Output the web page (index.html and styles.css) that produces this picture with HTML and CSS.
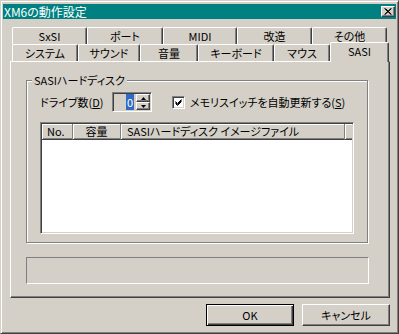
FILE: index.html
```html
<!DOCTYPE html>
<html lang="ja">
<head>
    <meta charset="UTF-8">
    <title>XM6の動作設定</title>
    <link rel="stylesheet" href="styles.css">
</head>
<body>
    <div class="window">
        <div class="caption">
            <span class="title">XM6の動作設定</span>
            <span class="close">
                <svg width="8" height="7" viewBox="0 0 8 7"><path d="M0.5 0.5 L7 6.5 M1.5 0.5 L7.5 6.5 M7 0.5 L0.5 6.5 M7.5 0.5 L1 6.5" stroke="#000" stroke-width="1" fill="none"/></svg>
            </span>
        </div>
        <div class="client">
            <div class="tabs">
                <div class="tab-row">
                    <div class="tab w75">SxSI</div>
                    <div class="tab w76">ポート</div>
                    <div class="tab w74">MIDI</div>
                    <div class="tab w75">改造</div>
                    <div class="tab w75">その他</div>
                </div>
                <div class="tab-row">
                    <div class="tab w66">システム</div>
                    <div class="tab w62">サウンド</div>
                    <div class="tab w58">音量</div>
                    <div class="tab w76">キーボード</div>
                    <div class="tab w56">マウス</div>
                    <div class="tab tab-active">SASI</div>
                </div>
            </div>
            <div class="panel">
                <div class="group">
                    <div class="group-title">SASIハードディスク</div>
                    <div class="group-body">
                        <div class="drive-row">
                            <span class="drive-label">ドライブ数(<u>D</u>)</span>
                            <div class="spin">
                                <div class="spin-value"><span class="sel">0</span></div>
                                <div class="spin-buttons">
                                    <div class="spin-btn"><svg width="5" height="3" viewBox="0 0 5 3"><path d="M2.5 0 L5 3 L0 3 Z" fill="#000"/></svg></div>
                                    <div class="spin-btn"><svg width="5" height="3" viewBox="0 0 5 3"><path d="M0 0 L5 0 L2.5 3 Z" fill="#000"/></svg></div>
                                </div>
                            </div>
                            <span class="checkbox">
                                <svg width="7" height="7" viewBox="0 0 7 7"><path d="M0.5 2.5 L2.5 4.5 L6.5 0.5 M0.5 3.5 L2.5 5.5 L6.5 1.5 M0.5 4.5 L2.5 6.5 L6.5 2.5" stroke="#000" stroke-width="1" fill="none"/></svg>
                            </span>
                            <span class="check-label">メモリスイッチを自動更新する(<u>S</u>)</span>
                        </div>
                        <div class="list">
                            <div class="list-header">
                                <div class="col col-no">No.</div>
                                <div class="col col-size">容量</div>
                                <div class="col col-file">SASIハードディスク イメージファイル</div>
                                <div class="col col-fill"></div>
                            </div>
                        </div>
                    </div>
                </div>
                <div class="status"></div>
            </div>
            <div class="buttons">
                <button class="btn btn-default">OK</button>
                <button class="btn">キャンセル</button>
            </div>
        </div>
    </div>
</body>
</html>
```

FILE: styles.css
```css
* {
    box-sizing: border-box;
}
body {
    margin: 0;
    font-family: "Noto Sans CJK JP", "Noto Sans", sans-serif;
    font-size: 11px;
    font-feature-settings: "palt";
    color: #000;
    background: #d4d0c8;
}
.window {
    width: 399px;
    height: 334px;
    background: #d4d0c8;
    border: 1px solid;
    border-color: #d4d0c8 #404040 #404040 #d4d0c8;
    box-shadow: inset 1px 1px #fff, inset -1px -1px #808080;
    padding: 3px 2px 2px 2px;
}
.caption {
    height: 15px;
    background: #008080;
    color: #fff;
    display: flex;
    align-items: center;
    justify-content: space-between;
    padding: 0 1px 0 1px;
}
.title {
    font-size: 12px;
    line-height: 15px;
}
.close {
    width: 14px;
    height: 11px;
    background: #d4d0c8;
    border: 1px solid;
    border-color: #fff #404040 #404040 #fff;
    box-shadow: inset -1px -1px #808080;
    display: flex;
    align-items: center;
    justify-content: center;
}
.close svg {
    display: block;
}
.client {
    padding: 8px 0 0 7px;
}
.tab-row {
    display: flex;
    height: 17px;
    padding-left: 2px;
}
.tab {
    flex-shrink: 0;
    height: 17px;
    border-top: 1px solid #fff;
    border-left: 1px solid #fff;
    border-right: 1px solid #404040;
    box-shadow: inset -1px 0 #808080;
    border-radius: 2px 2px 0 0;
    text-align: center;
    line-height: 16px;
    background: #d4d0c8;
}
.w56 { width: 56px; }
.w58 { width: 58px; }
.w62 { width: 62px; }
.w66 { width: 66px; }
.w74 { width: 74px; }
.w75 { width: 75px; }
.w76 { width: 76px; }
.tab-active {
    width: 59px;
    height: 20px;
    margin-top: -2px;
    position: relative;
    z-index: 1;
    line-height: 16px;
}
.panel {
    width: 380px;
    height: 237px;
    border: 1px solid;
    border-color: #fff #404040 #404040 #fff;
    box-shadow: inset -1px -1px #808080;
    padding: 18px 15px 12px 15px;
}
.group {
    width: 342px;
    border: 1px solid #808080;
    box-shadow: inset 1px 1px #fff, 1px 1px #fff;
}
.group-title {
    width: fit-content;
    margin: -7px 0 0 5px;
    padding: 0 2px;
    line-height: 13px;
    background: #d4d0c8;
}
.group-body {
    padding: 5px 13px 8px 13px;
}
.drive-row {
    display: flex;
    align-items: center;
    height: 20px;
}
.drive-label {
    flex-shrink: 0;
    width: 72px;
    white-space: nowrap;
}
.spin {
    flex-shrink: 0;
    width: 40px;
    height: 20px;
    display: flex;
    align-items: center;
    border: 1px solid;
    border-color: #808080 #fff #fff #808080;
    box-shadow: inset 1px 1px #404040, inset -1px -1px #d4d0c8;
    padding: 1px;
}
.spin-value {
    flex: 1;
    text-align: right;
    padding-right: 2px;
    line-height: 12px;
}
.sel {
    background: #316ac5;
    color: #fff;
    padding: 0 1px;
}
.spin-buttons {
    flex-shrink: 0;
    width: 14px;
    height: 16px;
    display: flex;
    flex-direction: column;
}
.spin-btn {
    height: 8px;
    border: 1px solid;
    border-color: #fff #404040 #404040 #fff;
    box-shadow: inset -1px -1px #808080;
    display: flex;
    align-items: center;
    justify-content: center;
}
.spin-btn svg {
    display: block;
}
.checkbox {
    flex-shrink: 0;
    width: 13px;
    height: 13px;
    margin-left: 20px;
    background: #fff;
    border: 1px solid;
    border-color: #808080 #fff #fff #808080;
    box-shadow: inset 1px 1px #404040, inset -1px -1px #d4d0c8;
    display: flex;
    align-items: center;
    justify-content: center;
}
.checkbox svg {
    display: block;
}
.check-label {
    margin-left: 5px;
    white-space: nowrap;
}
.list {
    width: 314px;
    height: 112px;
    margin-top: 10px;
    background: #fff;
    border: 1px solid;
    border-color: #808080 #fff #fff #808080;
    box-shadow: inset 1px 1px #404040, inset -1px -1px #d4d0c8;
    padding: 1px;
}
.list-header {
    display: flex;
    height: 16px;
}
.col {
    flex-shrink: 0;
    height: 16px;
    background: #d4d0c8;
    border-right: 1px solid #808080;
    border-bottom: 1px solid #404040;
    box-shadow: inset 1px 1px #fff, inset 0 -1px #808080;
    line-height: 15px;
    white-space: nowrap;
    overflow: hidden;
}
.col-no {
    width: 31px;
    padding-left: 5px;
}
.col-size {
    width: 48px;
    text-align: center;
}
.col-file {
    width: 224px;
    padding-left: 6px;
}
.col-fill {
    flex: 1;
    border-right: none;
}
.status {
    width: 343px;
    height: 27px;
    margin-top: 14px;
    border: 1px solid;
    border-color: #808080 #fff #fff #808080;
}
.buttons {
    width: 380px;
    display: flex;
    justify-content: flex-end;
    gap: 8px;
    margin-top: 6px;
}
.btn {
    width: 88px;
    height: 22px;
    margin: 0;
    padding: 0;
    font-family: inherit;
    font-size: 11px;
    font-feature-settings: "palt";
    color: #000;
    background: #d4d0c8;
    border: 1px solid;
    border-color: #fff #404040 #404040 #fff;
    box-shadow: inset -1px -1px #808080;
    border-radius: 0;
    line-height: 18px;
}
.btn-default {
    border: 1px solid #000;
    box-shadow: inset 1px 1px #fff, inset -1px -1px #404040, inset -2px -2px #808080;
}
```
